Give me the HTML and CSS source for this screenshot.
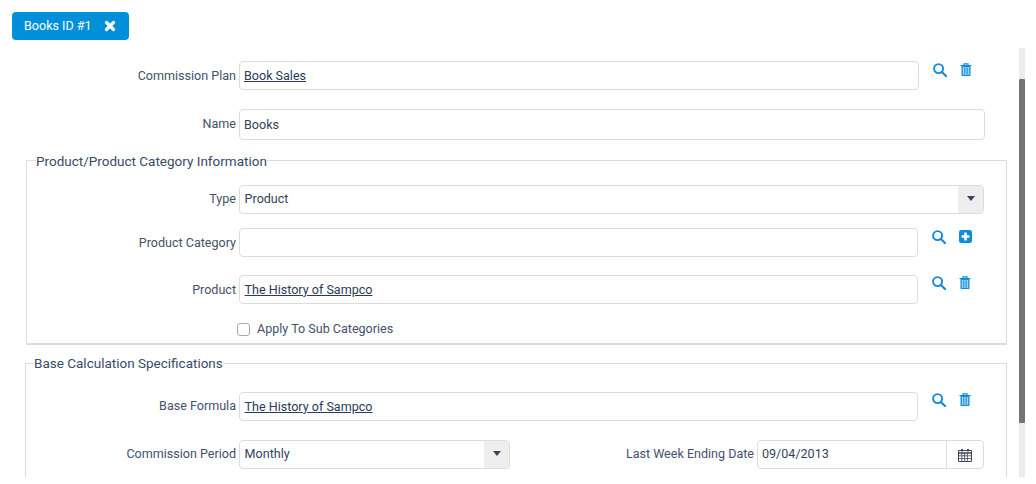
FILE: index.html
```html
<!DOCTYPE html>
<html lang="en">
<head>
<meta charset="utf-8">
<title>Books ID #1</title>
<link rel="stylesheet" href="styles.css">
</head>
<body>
<svg class="defs" width="0" height="0" aria-hidden="true">
  <symbol id="i-search" viewBox="0 0 14 14"><circle cx="5.6" cy="5.6" r="4.5" fill="none" stroke="currentColor" stroke-width="1.9"/><path d="M8.9 8.9l4.1 4.1" fill="none" stroke="currentColor" stroke-width="2.1" stroke-linecap="round"/></symbol>
  <symbol id="i-trash" viewBox="0 0 11 13"><path d="M3.5 2V.8h4V2M0 2.5h11" fill="none" stroke="currentColor" stroke-width="1.2"/><path d="M1 3v9.1c0 .5.3.9.8.9h7.4c.5 0 .8-.4.8-.9V3z" fill="currentColor"/><path d="M2.3 4v7.8h6.4V4z" fill="#b9d9f2"/><path d="M3.9 4.3v7.2M5.5 4.3v7.2M7.1 4.3v7.2" stroke="currentColor" stroke-width=".8"/></symbol>
  <symbol id="i-plus" viewBox="0 0 12 12"><rect width="12" height="12" rx="2" fill="currentColor"/><path d="M6 2.4v7.2M2.4 6h7.2" stroke="#fff" stroke-width="2.4"/></symbol>
  <symbol id="i-close" viewBox="0 0 12 12"><path d="M2.5 2.5l7 7M9.5 2.5l-7 7" stroke="currentColor" stroke-width="3.2" stroke-linecap="round"/></symbol>
  <symbol id="i-cal" viewBox="0 0 14 14"><path d="M.5 2.5h13v11H.5z" fill="#fff" stroke="currentColor"/><path d="M1 5h12" stroke="currentColor" stroke-width="1.6"/><path d="M1 7.8h12M1 10.6h12M3.8 5v8M6.6 5v8M9.4 5v8" stroke="currentColor" stroke-width=".8"/><path d="M4 1v2.5M10 1v2.5" stroke="currentColor" stroke-width="1.8"/></symbol>
</svg>
<header class="tabs">
  <button class="tab" type="button">Books ID #1<svg class="tab-x"><use href="#i-close"/></svg></button>
</header>
<div class="shell">
  <main class="pane">
    <div class="row row-plan">
      <label class="lbl">Commission Plan</label>
      <div class="field w-680 lift"><a class="link" href="#">Book Sales</a></div>
      <div class="acts act-plan"><svg class="ic-s"><use href="#i-search"/></svg><svg class="ic-t"><use href="#i-trash"/></svg></div>
    </div>
    <div class="row row-name">
      <label class="lbl lbl-up">Name</label>
      <div class="field w-746 tall">Books</div>
    </div>

    <fieldset class="group group-a">
      <legend>Product/Product Category Information</legend>
      <div class="row row-type">
        <label class="lbl lift">Type</label>
        <div class="field w-745 sel lift-in"><span class="sel-v">Product</span><span class="caret"></span></div>
      </div>
      <div class="row row-cat">
        <label class="lbl">Product Category</label>
        <div class="field w-679"></div>
        <div class="acts act-cat"><svg class="ic-s"><use href="#i-search"/></svg><svg class="ic-p"><use href="#i-plus"/></svg></div>
      </div>
      <div class="row row-prod">
        <label class="lbl">Product</label>
        <div class="field w-679 lift-3"><a class="link" href="#">The History of Sampco</a></div>
        <div class="acts act-prod"><svg class="ic-s"><use href="#i-search"/></svg><svg class="ic-t"><use href="#i-trash"/></svg></div>
      </div>
      <div class="row row-check">
        <span class="box"></span><span class="check-t">Apply To Sub Categories</span>
      </div>
    </fieldset>

    <fieldset class="group group-b">
      <legend>Base Calculation Specifications</legend>
      <div class="row row-formula">
        <label class="lbl lift-2">Base Formula</label>
        <div class="field w-679 lift-3"><a class="link" href="#">The History of Sampco</a></div>
        <div class="acts act-prod"><svg class="ic-s"><use href="#i-search"/></svg><svg class="ic-t"><use href="#i-trash"/></svg></div>
      </div>
      <div class="row row-period">
        <label class="lbl lift-2">Commission Period</label>
        <div class="field w-271 sel lift-in"><span class="sel-v">Monthly</span><span class="caret"></span></div>
        <label class="lbl lbl-date lift-2">Last Week Ending Date</label>
        <div class="field w-227 date lift-in"><span class="sel-v">09/04/2013</span><span class="cal"><svg class="ic-c"><use href="#i-cal"/></svg></span></div>
      </div>
    </fieldset>
  </main>
  <div class="bar"><div class="thumb"></div></div>
</div>
</body>
</html>
```
FILE: styles.css
```css
* { box-sizing: border-box; }
html, body { margin: 0; height: 484px; overflow: hidden; background: #fff; }
body { font: 12.55px/18px Roboto, "Liberation Sans", sans-serif; color: #3b4a5e; }
.defs { position: absolute; }
.tabs { height: 48px; padding: 12px 0 0 12px; }
.tab {
  display: flex; align-items: center; width: 117px; height: 28px; padding: 0 0 0 12px;
  border: 0; border-radius: 4px; background: #0090d9; color: #fff; font: inherit;
}
.tab-x { width: 12px; height: 12px; margin-left: 12.5px; color: #fff; }
.shell { display: flex; height: 429px; }
.pane { width: 1019px; height: 429px; overflow: hidden; }
.bar { width: 6px; height: 429px; background: #ececec; padding-top: 31px; }
.thumb { height: 344px; background: #757273; border-radius: 1px; }

.row { display: flex; align-items: center; }
.lbl { width: 236px; flex: none; text-align: right; color: #43526a; }
.lbl-up { margin-top: -2px; }
.lift { padding-bottom: 1px; }
.lift-2 { padding-bottom: 2px; }
.lift-3 { padding-bottom: 3px; }
.field {
  flex: none; height: 29px; margin-left: 3px; padding: 0 4px; display: flex; align-items: center;
  border: 1px solid #dcdcdc; border-radius: 4px; background: #fff; color: #35445a;
}
.link { color: #2b3b55; text-decoration: underline; }
.w-680 { width: 680px; }
.w-746 { width: 746px; }
.w-745 { width: 745px; }
.w-679 { width: 679px; }
.w-271 { width: 271px; }
.w-227 { width: 227px; }
.tall { height: 31px; }

.row-plan { margin-top: 13px; }
.row-name { margin-top: 19px; }
.acts { display: flex; align-items: center; margin-left: 14px; height: 14px; color: #0c8ddb; }
.act-plan { margin-top: -12px; }
.act-cat { margin-top: -12px; }
.act-prod { margin-top: -14px; }
.ic-s { width: 14px; height: 14px; color: #1487dc; }
.ic-t { width: 12px; height: 13px; margin-left: 13px; }
.ic-p { width: 13px; height: 13px; margin-left: 13px; }

.group { margin: 0; min-width: 0; border: 1px solid #dcdcdc; }
.group legend { padding: 0; font-size: 13.5px; line-height: 18px; color: #3b4a66; }
.group-a { width: 981px; height: 195px; margin: 10px 0 0 26px; padding: 0; border-bottom-width: 2px; }
.group-a legend { margin-left: 9px; padding-top: 2px; }
.group-b { width: 982px; height: 140px; margin: 9px 0 0 25px; padding: 0; }
.group-b legend { margin-left: 8px; }
.group .lbl { width: 209px; }
.group-b .lbl { width: 210px; }
.group .field { padding-left: 4.6px; }
.group .sel, .group .date { padding: 0; }

.row-type { margin-top: 15px; }
.row-cat { margin-top: 14px; }
.row-prod { margin-top: 18px; }
.row-check { margin: 16px 0 0 210px; }
.box { width: 13px; height: 13px; border: 1px solid #a9a9a9; border-radius: 3px; background: #fff; }
.check-t { margin-left: 7px; color: #43526a; }
.row-formula { margin-top: 20px; }
.row-period { margin-top: 19px; }

.sel, .date { padding: 0; overflow: hidden; }
.sel-v { flex: 1; padding-left: 4.6px; }
.lift-in .sel-v { padding-bottom: 2px; }
.date .sel-v { padding-left: 4px; }
.caret {
  width: 25px; height: 100%; background: #eeeeee; position: relative; flex: none;
}
.caret::after {
  content: ""; position: absolute; left: 9px; top: 10px;
  border: 4px solid transparent; border-top: 5px solid #36455c; border-bottom: 0;
}
.group-b .lbl.lbl-date { width: 244px; }
.cal { width: 37px; height: 100%; border-left: 1px solid #dcdcdc; display: flex; align-items: center; justify-content: center; flex: none; }
.ic-c { width: 14px; height: 14px; color: #3a4658; }
```
